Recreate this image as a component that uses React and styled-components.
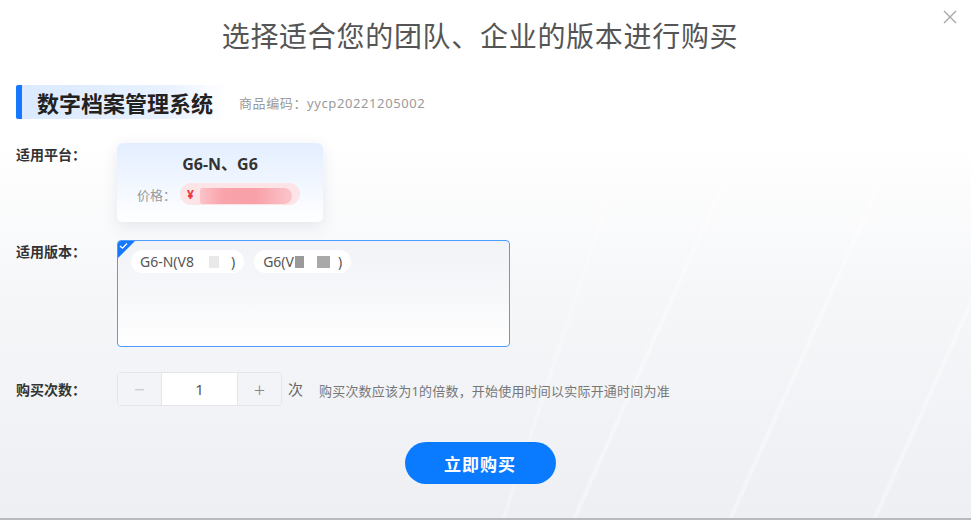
import React, { useState } from 'react';
import styled, { createGlobalStyle } from 'styled-components';

const GlobalStyle = createGlobalStyle`
  html, body {
    margin: 0;
    padding: 0;
  }
  body {
    font-family: "Noto Sans", "Noto Sans CJK SC", sans-serif;
    color: #333;
  }
`;

const Screen = styled.div`
  position: relative;
  width: 971px;
  height: 520px;
  overflow: hidden;
  box-sizing: border-box;
  border-bottom: 2px solid #b9bac0;
  background:
    linear-gradient(114deg, transparent 66.7%, rgba(255,255,255,0.45) 67%, transparent 67.3%),
    linear-gradient(114deg, transparent 79.7%, rgba(255,255,255,0.45) 80%, transparent 80.3%),
    linear-gradient(114deg, transparent 91.7%, rgba(255,255,255,0.45) 92%, transparent 92.3%),
    linear-gradient(108deg, transparent 58.7%, rgba(255,255,255,0.3) 59%, transparent 59.3%),
    linear-gradient(180deg, #ffffff 0%, #ffffff 28%, #f6f7f9 55%, #eeeff3 100%);
`;

const Dialog = styled.div`
  width: 960px;
  box-sizing: border-box;
  padding: 0 16px;
  display: flex;
  flex-direction: column;
`;

const Title = styled.h1`
  margin: 18px 0 0;
  text-align: center;
  font-size: 28px;
  line-height: 36px;
  font-weight: 400;
  color: #555;
  letter-spacing: 0.7px;
`;

const Close = styled.button`
  position: absolute;
  top: 10px;
  right: 14px;
  width: 14px;
  height: 14px;
  padding: 0;
  border: none;
  background: none;
  cursor: pointer;
  color: #a8a8a8;
`;

const ProductHead = styled.div`
  margin-top: 31px;
  display: flex;
  align-items: center;
  height: 34px;
`;

const ProductName = styled.div`
  height: 34px;
  display: flex;
  align-items: center;
  padding: 0 14px 0 15px;
  border-left: 6px solid #1677ff;
  border-radius: 2px;
  background: linear-gradient(90deg, #dbeaff 0%, #e8f1ff 70%, rgba(255,255,255,0) 100%);
  font-size: 22px;
  font-weight: 700;
  color: #222;
`;

const ProductCode = styled.span`
  margin-left: 12px;
  font-size: 13px;
  letter-spacing: 0.6px;
  color: #9a9a9a;
`;

const Row = styled.div`
  display: flex;
  align-items: flex-start;
  margin-top: ${p => p.$top}px;
`;

const Label = styled.div`
  width: 101px;
  flex-shrink: 0;
  padding-top: ${p => p.$pad}px;
  font-size: 14px;
  line-height: 20px;
  font-weight: 700;
  color: #333;
`;

const PlatformCard = styled.div`
  width: 206px;
  height: 79px;
  box-sizing: border-box;
  border-radius: 6px;
  background: linear-gradient(180deg, #e3eeff 0%, #f4f8ff 60%, #ffffff 100%);
  box-shadow: 0 4px 16px rgba(30, 50, 90, 0.10);
  display: flex;
  flex-direction: column;
  align-items: center;
  padding-top: 10px;
`;

const PlatformName = styled.div`
  font-size: 16px;
  line-height: 22px;
  font-weight: 700;
  color: #333;
`;

const PriceLine = styled.div`
  margin-top: 8px;
  display: flex;
  align-items: center;
  align-self: flex-start;
  padding-left: 20px;
  font-size: 13px;
  color: #999;
`;

const PricePill = styled.div`
  margin-left: 4px;
  width: 120px;
  height: 22px;
  border-radius: 11px;
  background: #fde4e7;
  display: flex;
  align-items: center;
  padding-left: 7px;
  box-sizing: border-box;
  color: #f0323c;
  font-size: 12px;
  font-weight: 700;
`;

const Redacted = styled.span`
  display: inline-block;
  margin-left: 6px;
  width: 92px;
  height: 16px;
  margin-top: 4px;
  border-radius: 2px 8px 8px 2px;
  background: linear-gradient(90deg, #fbc3c8 0%, #f9a3aa 25%, #f8a0a7 60%, #fbc6cb 100%);
`;

const VersionBox = styled.div`
  position: relative;
  width: 393px;
  height: 107px;
  box-sizing: border-box;
  border: 1.5px solid #4c9dff;
  border-radius: 4px;
  background: linear-gradient(180deg, #f2f3f7 0%, #f7f8fa 55%, #ffffff 100%);
  padding: 9px 13px;
  display: flex;
  align-items: flex-start;
  gap: 10px;
  overflow: hidden;
`;

const Corner = styled.div`
  position: absolute;
  top: 0;
  left: 0;
  width: 0;
  height: 0;
  border-top: 17px solid #1677ff;
  border-right: 17px solid transparent;
  svg {
    position: absolute;
    top: -16px;
    left: 1px;
  }
`;

const Chip = styled.span`
  display: inline-flex;
  align-items: center;
  height: 23px;
  padding: 0 9px;
  border-radius: 12px;
  background: #ffffff;
  font-size: 14px;
  color: #555;
  white-space: nowrap;
`;

const Mask = styled.span`
  display: inline-block;
  width: ${p => p.$w}px;
  height: 12px;
  margin: 0 1px;
  background: ${p => p.$c};
`;

const Stepper = styled.div`
  display: flex;
  height: 34px;
  box-sizing: border-box;
  border: 1px solid #e4e6ea;
  border-radius: 4px;
  overflow: hidden;
`;

const StepButton = styled.button`
  width: ${p => p.$w}px;
  border: none;
  background: #f3f4f7;
  color: ${p => (p.$dim ? '#c4c6cc' : '#888')};
  font-size: 20px;
  font-weight: 300;
  padding: 0;
  cursor: pointer;
  font-family: "Noto Sans", sans-serif;
`;

const StepValue = styled.div`
  width: 75px;
  background: #fff;
  border-left: 1px solid #e4e6ea;
  border-right: 1px solid #e4e6ea;
  display: flex;
  align-items: center;
  justify-content: center;
  font-size: 15px;
  color: #555;
`;

const Unit = styled.span`
  margin-left: 6px;
  font-size: 15px;
  line-height: 34px;
  color: #666;
`;

const Hint = styled.span`
  margin-left: 16px;
  font-size: 13px;
  letter-spacing: 0.2px;
  line-height: 38px;
  color: #777;
`;

const BuyButton = styled.button`
  align-self: center;
  margin-top: 32px;
  width: 151px;
  height: 42px;
  border: none;
  border-radius: 21px;
  background: #0a7bff;
  color: #fff;
  font-size: 17px;
  font-weight: 700;
  letter-spacing: 1px;
  cursor: pointer;
  font-family: "Noto Sans CJK SC", sans-serif;
`;

export default function App() {
  const [count, setCount] = useState(1);

  return (
    <>
      <GlobalStyle />
      <Screen>
        <Close aria-label="关闭">
          <svg width="14" height="14" viewBox="0 0 14 14">
            <path d="M1 1L13 13M13 1L1 13" stroke="currentColor" strokeWidth="1.4" />
          </svg>
        </Close>
        <Dialog>
          <Title>选择适合您的团队、企业的版本进行购买</Title>

          <ProductHead>
            <ProductName>数字档案管理系统</ProductName>
            <ProductCode>商品编码：yycp20221205002</ProductCode>
          </ProductHead>

          <Row $top={24}>
            <Label $pad={2}>适用平台：</Label>
            <PlatformCard>
              <PlatformName>G6-N、G6</PlatformName>
              <PriceLine>
                价格：
                <PricePill>
                  ¥<Redacted />
                </PricePill>
              </PriceLine>
            </PlatformCard>
          </Row>

          <Row $top={18}>
            <Label $pad={2}>适用版本：</Label>
            <VersionBox>
              <Corner>
                <svg width="9" height="8" viewBox="0 0 9 8">
                  <path d="M1 4L3.5 6.2L8 1.5" fill="none" stroke="#fff" strokeWidth="1.3" />
                </svg>
              </Corner>
              <Chip>
                G6-N(V8<Mask $w={12} $c="#fff" /><Mask $w={10} $c="#e9e9ea" /><Mask $w={9} $c="#fff" />)
              </Chip>
              <Chip>
                G6(V<Mask $w={9} $c="#9a9a9a" /><Mask $w={9} $c="#fff" /><Mask $w={13} $c="#a9a9aa" /><Mask $w={5} $c="#fff" />)
              </Chip>
            </VersionBox>
          </Row>

          <Row $top={25}>
            <Label $pad={8}>购买次数：</Label>
            <Stepper>
              <StepButton $w={43} $dim onClick={() => setCount(c => Math.max(1, c - 1))}>−</StepButton>
              <StepValue>{count}</StepValue>
              <StepButton $w={43} onClick={() => setCount(c => c + 1)}>+</StepButton>
            </Stepper>
            <Unit>次</Unit>
            <Hint>购买次数应该为1的倍数，开始使用时间以实际开通时间为准</Hint>
          </Row>

          <BuyButton>立即购买</BuyButton>
        </Dialog>
      </Screen>
    </>
  );
}
